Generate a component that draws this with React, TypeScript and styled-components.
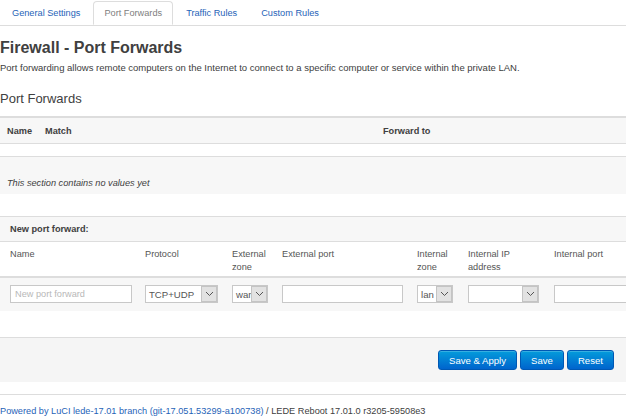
import React from 'react'
import styled, { createGlobalStyle } from 'styled-components'

const GlobalStyle = createGlobalStyle`
    html, body {
        margin: 0;
        padding: 0;
        background: #ffffff;
        overflow: hidden;
    }
    body {
        font-family: "Liberation Sans", Arial, sans-serif;
        font-size: 9.2px;
        color: #404040;
    }
`

const Page = styled.div`
    width: 626px;
    min-height: 419px;
    overflow: hidden;
`

const TabBar = styled.ul`
    display: flex;
    margin: 0;
    padding: 1px 0 0 1px;
    list-style: none;
    border-bottom: 1px solid #dddddd;
    height: 24px;
`

const Tab = styled.li<{ active?: boolean }>`
    margin-right: 2px;
    padding: 0 10px;
    height: 24px;
    line-height: 23px;
    box-sizing: border-box;
    border: 1px solid ${(p) => (p.active ? '#dddddd' : 'transparent')};
    border-bottom-color: ${(p) => (p.active ? '#ffffff' : 'transparent')};
    border-radius: 4px 4px 0 0;
    background: #ffffff;
    color: ${(p) => (p.active ? '#808080' : '#1f63b8')};
    margin-bottom: -1px;
    position: relative;
    white-space: nowrap;
`

const Title = styled.h2`
    margin: 13px 0 0 0;
    font-size: 16px;
    line-height: 18px;
    font-weight: bold;
    color: #404040;
`

const Description = styled.div`
    margin-top: 5px;
    font-size: 9.5px;
    line-height: 12px;
    white-space: nowrap;
`

const Legend = styled.div`
    margin-top: 17px;
    font-size: 13px;
    line-height: 16px;
    color: #404040;
`

const SectionTable = styled.div`
    margin-top: 9px;
    border-top: 2px solid #dddddd;
`

const TitleRow = styled.div`
    display: grid;
    grid-template-columns: 38px 338px 1fr;
    padding-left: 7px;
    height: 25px;
    align-items: center;
    background: #f7f7f7;
    border-bottom: 1px solid #dddddd;
    font-weight: bold;
`

const SpacerRow = styled.div`
    height: 12px;
    border-bottom: 1px solid #dddddd;
`

const PlaceholderRow = styled.div`
    height: 37px;
    padding-left: 7px;
    display: flex;
    align-items: flex-end;
    padding-bottom: 6px;
    box-sizing: border-box;
    background: #f7f7f7;
    font-style: italic;
`

const NewSection = styled.div`
    margin-top: 22px;
    border-top: 1px solid #dddddd;
`

const NewHeading = styled.div`
    height: 24px;
    line-height: 24px;
    padding-left: 10px;
    background: #f7f7f7;
    border-bottom: 1px solid #dddddd;
    font-weight: bold;
`

const FieldGrid = styled.div<{ shaded?: boolean }>`
    display: grid;
    grid-template-columns: 135px 87px 50px 135px 51px 86px 130px;
    padding-left: 10px;
    width: 700px;
    background: ${(p) => (p.shaded ? '#f7f7f7' : '#ffffff')};
`

const LabelRow = styled(FieldGrid)`
    height: 36px;
    padding-top: 6px;
    box-sizing: border-box;
    border-bottom: 2px solid #dddddd;
    line-height: 13px;
`

const InputRow = styled(FieldGrid)`
    height: 33px;
    align-items: center;
    padding-bottom: 1px;
    box-sizing: border-box;
`

const Label = styled.div`
    color: #555555;
`

const TextInput = styled.input<{ w: number }>`
    width: ${(p) => p.w}px;
    height: 18px;
    box-sizing: border-box;
    border: 1px solid #c8c8c8;
    padding: 0 4px;
    margin: 0;
    font-family: "Liberation Sans", Arial, sans-serif;
    font-size: 9.2px;
    color: #404040;
    background: #ffffff;
    outline: none;
    &::placeholder {
        color: #b8b8b8;
    }
`

const SelectBox = styled.div<{ w: number }>`
    width: ${(p) => p.w}px;
    height: 18px;
    box-sizing: border-box;
    border: 1px solid #c8c8c8;
    background: #ffffff;
    display: flex;
    align-items: center;
    overflow: hidden;
`

const SelectText = styled.span`
    flex: 1;
    min-width: 0;
    padding-left: 3px;
    font-size: 9.6px;
    color: #555555;
    white-space: nowrap;
    overflow: hidden;
    text-overflow: clip;
`

const SelectArrow = styled.span`
    width: 16px;
    height: 16px;
    box-sizing: border-box;
    flex: none;
    border: 1px solid #c4c4c4;
    background: #e2e2e2;
    display: flex;
    align-items: center;
    justify-content: center;
`

const ActionBar = styled.div`
    margin-top: 26px;
    height: 44px;
    border-top: 1px solid #dddddd;
    background: #f5f5f5;
    display: flex;
    justify-content: flex-end;
    align-items: center;
    gap: 3px;
    padding-right: 12px;
`

const Button = styled.button`
    height: 20px;
    padding: 0 10px;
    border: 1px solid #0058b4;
    border-radius: 3px;
    background: linear-gradient(#049cdb, #0064cd);
    color: #ffffff;
    font-family: "Liberation Sans", Arial, sans-serif;
    font-size: 9.6px;
    cursor: pointer;
    box-shadow: inset 0 1px 0 rgba(255, 255, 255, 0.2);
`

const Footer = styled.div`
    margin-top: 12px;
    border-top: 1px solid #dddddd;
    padding-top: 11px;
    white-space: nowrap;
`

const FooterLink = styled.a`
    color: #1f63b8;
    text-decoration: none;
`

const Chevron = () => (
    <svg width="9" height="6" viewBox="0 0 9 6">
        <path d="M1 1 L4.5 4.5 L8 1" fill="none" stroke="#555" strokeWidth="1" />
    </svg>
)

const Select = ({ w, value }: { w: number; value?: string }) => (
    <SelectBox w={w}>
        <SelectText>{value}</SelectText>
        <SelectArrow>
            <Chevron />
        </SelectArrow>
    </SelectBox>
)

const tabs = ['General Settings', 'Port Forwards', 'Traffic Rules', 'Custom Rules']

const App = () => {
    return (
        <Page>
            <GlobalStyle />
            <TabBar>
                {tabs.map((t) => (
                    <Tab key={t} active={t === 'Port Forwards'}>
                        {t}
                    </Tab>
                ))}
            </TabBar>
            <Title>Firewall - Port Forwards</Title>
            <Description>
                Port forwarding allows remote computers on the Internet to connect to a specific computer or service within
                the private LAN.
            </Description>
            <Legend>Port Forwards</Legend>
            <SectionTable>
                <TitleRow>
                    <span>Name</span>
                    <span>Match</span>
                    <span>Forward to</span>
                </TitleRow>
                <SpacerRow />
                <PlaceholderRow>This section contains no values yet</PlaceholderRow>
            </SectionTable>
            <NewSection>
                <NewHeading>New port forward:</NewHeading>
                <LabelRow>
                    <Label>Name</Label>
                    <Label>Protocol</Label>
                    <Label>
                        External
                        <br />
                        zone
                    </Label>
                    <Label>External port</Label>
                    <Label>
                        Internal
                        <br />
                        zone
                    </Label>
                    <Label>
                        Internal IP
                        <br />
                        address
                    </Label>
                    <Label>Internal port</Label>
                </LabelRow>
                <InputRow shaded>
                    <TextInput w={122} placeholder="New port forward" />
                    <Select w={73} value="TCP+UDP" />
                    <Select w={36} value="wan" />
                    <TextInput w={121} />
                    <Select w={36} value="lan" />
                    <Select w={71} />
                    <TextInput w={121} />
                </InputRow>
            </NewSection>
            <ActionBar>
                <Button>Save &amp; Apply</Button>
                <Button>Save</Button>
                <Button>Reset</Button>
            </ActionBar>
            <Footer>
                <FooterLink href="#">Powered by LuCI lede-17.01 branch (git-17.051.53299-a100738)</FooterLink> / LEDE
                Reboot 17.01.0 r3205-59508e3
            </Footer>
        </Page>
    )
}

export default App
